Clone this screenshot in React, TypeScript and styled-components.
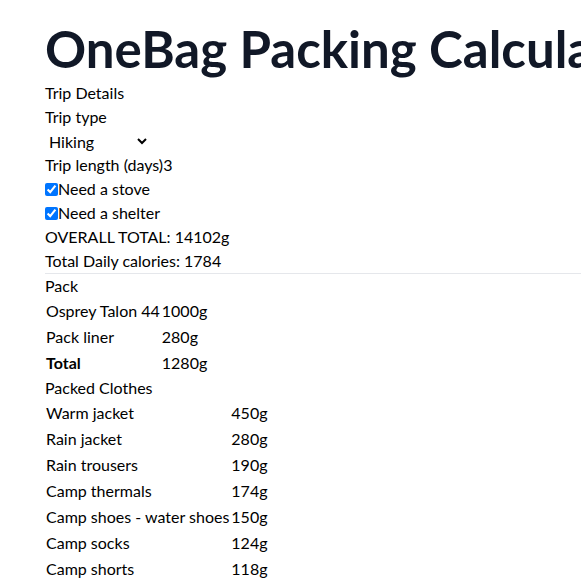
import React from 'react';
import styled, { createGlobalStyle } from 'styled-components';

type Item = { name: string; weight: number };

type Section = { title: string; items: Item[]; showTotal?: boolean };

const sections: Section[] = [
  {
    title: 'Pack',
    items: [
      { name: 'Osprey Talon 44', weight: 1000 },
      { name: 'Pack liner', weight: 280 },
    ],
    showTotal: true,
  },
  {
    title: 'Packed Clothes',
    items: [
      { name: 'Warm jacket', weight: 450 },
      { name: 'Rain jacket', weight: 280 },
      { name: 'Rain trousers', weight: 190 },
      { name: 'Camp thermals', weight: 174 },
      { name: 'Camp shoes - water shoes', weight: 150 },
      { name: 'Camp socks', weight: 124 },
      { name: 'Camp shorts', weight: 118 },
    ],
  },
];

const GlobalStyle = createGlobalStyle`
  *, *::before, *::after {
    box-sizing: border-box;
  }

  body {
    margin: 0;
    font-family: 'Segoe UI', Lato, 'Noto Sans', sans-serif;
    font-size: 16px;
    line-height: 24px;
    color: #000;
    background: #fff;
    overflow: hidden;
  }
`;

const Page = styled.div`
  padding: 17px 0 0 45px;
  white-space: nowrap;
`;

const Title = styled.h1`
  margin: 0;
  font-size: 51px;
  line-height: 64px;
  font-weight: 700;
  color: #111827;
`;

const Line = styled.div`
  display: flex;
  align-items: center;
  height: 24px;
`;

const Select = styled.select`
  width: 105px;
  height: 24px;
  border: 0;
  padding: 0;
  margin: 0;
  background: transparent;
  font: inherit;
  color: inherit;
`;

const Checkbox = styled.input`
  margin: 0;
  width: 13px;
  height: 13px;
`;

const Details = styled.div`
  border-bottom: 1px solid #e5e7eb;
`;

const Caption = styled.div`
  height: 24px;
`;

const Table = styled.table`
  border-collapse: collapse;
  margin: 0;
`;

const Cell = styled.td<{ $bold?: boolean }>`
  padding: 1px;
  line-height: 24px;
  font-weight: ${(p) => (p.$bold ? 700 : 400)};
`;

const GearTable = ({ title, items, showTotal }: Section) => {
  const total = items.reduce((sum, i) => sum + i.weight, 0);
  return (
    <>
      <Caption>{title}</Caption>
      <Table>
        <tbody>
          {items.map((item) => (
            <tr key={item.name}>
              <Cell>{item.name}</Cell>
              <Cell>{item.weight}g</Cell>
            </tr>
          ))}
          {showTotal && (
            <tr>
              <Cell $bold>Total</Cell>
              <Cell>{total}g</Cell>
            </tr>
          )}
        </tbody>
      </Table>
    </>
  );
};

export default function App() {
  return (
    <Page>
      <GlobalStyle />
      <Title>OneBag Packing Calculator</Title>
      <Details>
        <Line>Trip Details</Line>
        <Line>Trip type</Line>
        <Line>
          <Select defaultValue="hiking">
            <option value="hiking">Hiking</option>
            <option value="bikepacking">Bikepacking</option>
            <option value="travel">Travel</option>
          </Select>
        </Line>
        <Line>Trip length (days)3</Line>
        <Line>
          <Checkbox type="checkbox" defaultChecked />
          Need a stove
        </Line>
        <Line>
          <Checkbox type="checkbox" defaultChecked />
          Need a shelter
        </Line>
        <Line>OVERALL TOTAL: 14102g</Line>
        <Line>Total Daily calories: 1784</Line>
      </Details>
      {sections.map((s) => (
        <GearTable key={s.title} {...s} />
      ))}
    </Page>
  );
}
